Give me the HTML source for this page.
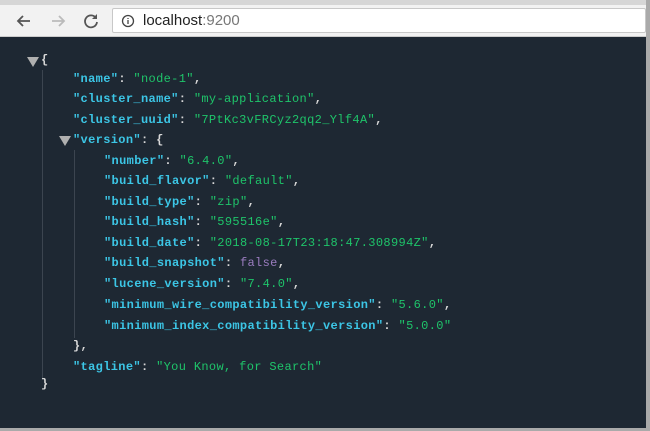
<!DOCTYPE html><html><head><style>
*{margin:0;padding:0;box-sizing:border-box}
body{width:650px;height:431px;overflow:hidden;background:#fff;position:relative;font-family:"Liberation Mono",monospace}
.tabs{position:absolute;left:0;top:0;width:650px;height:5px;background:#d6d6d6}
.bar{position:absolute;left:0;top:5px;width:650px;height:32px;background:#f2f2f2;border-bottom:1px solid #ccc}
.addr{position:absolute;left:112px;top:8px;width:534px;height:25px;background:#fff;border:1px solid #c8c8c8;border-radius:2px;font-family:"Liberation Sans",sans-serif;font-size:15px;color:#222;line-height:23px;padding-left:30px}
.addr span{color:#777}
.main{position:absolute;left:0;top:37px;width:646px;height:391px;background:#1e2833}
.edge{position:absolute;left:646px;top:0;width:4px;height:431px;background:#aaa}
.bot{position:absolute;left:0;top:428px;width:650px;height:3px;background:#aaa}
.l{position:absolute;font-size:12px;font-weight:bold;color:#d8d8d8;white-space:pre;letter-spacing:.35px;line-height:14px}
.k{color:#3cc6e6}.s{color:#1ec46a;font-weight:normal}.b{color:#9a7cbf;font-weight:normal}
.tri{position:absolute;width:0;height:0;border-left:6px solid transparent;border-right:6px solid transparent;border-top:10px solid #b0b0b0}
.vl{position:absolute;width:1px;background:#3c4550}
</style></head><body>
<div class="tabs"></div>
<div class="bar">
<svg style="position:absolute;left:14px;top:6px" width="20" height="20"><path d="M16 10H4M9 5L4 10L9 15" stroke="#555" stroke-width="1.8" fill="none"/></svg>
<svg style="position:absolute;left:48px;top:6px" width="20" height="20"><path d="M4 10H16M11 5L16 10L11 15" stroke="#bbb" stroke-width="1.8" fill="none"/></svg>
<svg style="position:absolute;left:81px;top:6px" width="20" height="20"><path d="M15 7A6 6 0 1 0 16 11" stroke="#555" stroke-width="1.8" fill="none"/><path d="M16 3V8H11Z" fill="#555"/></svg>
</div>
<div class="addr"><svg style="position:absolute;left:8px;top:5px" width="14" height="14"><circle cx="7" cy="7" r="5.5" stroke="#444" stroke-width="1.3" fill="none"/><path d="M7 6V10M7 4V5" stroke="#444" stroke-width="1.3"/></svg>localhost<span>:9200</span></div>
<div class="main"></div>
<div class="edge"></div><div class="bot"></div>
<div class="tri" style="left:27px;top:57px"></div>
<div class="tri" style="left:59px;top:136px"></div>
<div class="vl" style="left:42px;top:70px;height:310px"></div>
<div class="vl" style="left:74px;top:150px;height:188px"></div>
<div class="l" style="left:41px;top:53px">{</div>
<div class="l" style="left:73px;top:72px"><span class="k">"name"</span>: <span class="s">"node-1"</span>,</div>
<div class="l" style="left:73px;top:92px"><span class="k">"cluster_name"</span>: <span class="s">"my-application"</span>,</div>
<div class="l" style="left:73px;top:113px"><span class="k">"cluster_uuid"</span>: <span class="s">"7PtKc3vFRCyz2qq2_Ylf4A"</span>,</div>
<div class="l" style="left:73px;top:133px"><span class="k">"version"</span>: {</div>
<div class="l" style="left:104px;top:154px"><span class="k">"number"</span>: <span class="s">"6.4.0"</span>,</div>
<div class="l" style="left:104px;top:174px"><span class="k">"build_flavor"</span>: <span class="s">"default"</span>,</div>
<div class="l" style="left:104px;top:195px"><span class="k">"build_type"</span>: <span class="s">"zip"</span>,</div>
<div class="l" style="left:104px;top:215px"><span class="k">"build_hash"</span>: <span class="s">"595516e"</span>,</div>
<div class="l" style="left:104px;top:236px"><span class="k">"build_date"</span>: <span class="s">"2018-08-17T23:18:47.308994Z"</span>,</div>
<div class="l" style="left:104px;top:256px"><span class="k">"build_snapshot"</span>: <span class="b">false</span>,</div>
<div class="l" style="left:104px;top:277px"><span class="k">"lucene_version"</span>: <span class="s">"7.4.0"</span>,</div>
<div class="l" style="left:104px;top:298px"><span class="k">"minimum_wire_compatibility_version"</span>: <span class="s">"5.6.0"</span>,</div>
<div class="l" style="left:104px;top:319px"><span class="k">"minimum_index_compatibility_version"</span>: <span class="s">"5.0.0"</span></div>
<div class="l" style="left:73px;top:339px">},</div>
<div class="l" style="left:73px;top:360px"><span class="k">"tagline"</span>: <span class="s">"You Know, for Search"</span></div>
<div class="l" style="left:41px;top:377px">}</div>
</body></html>
